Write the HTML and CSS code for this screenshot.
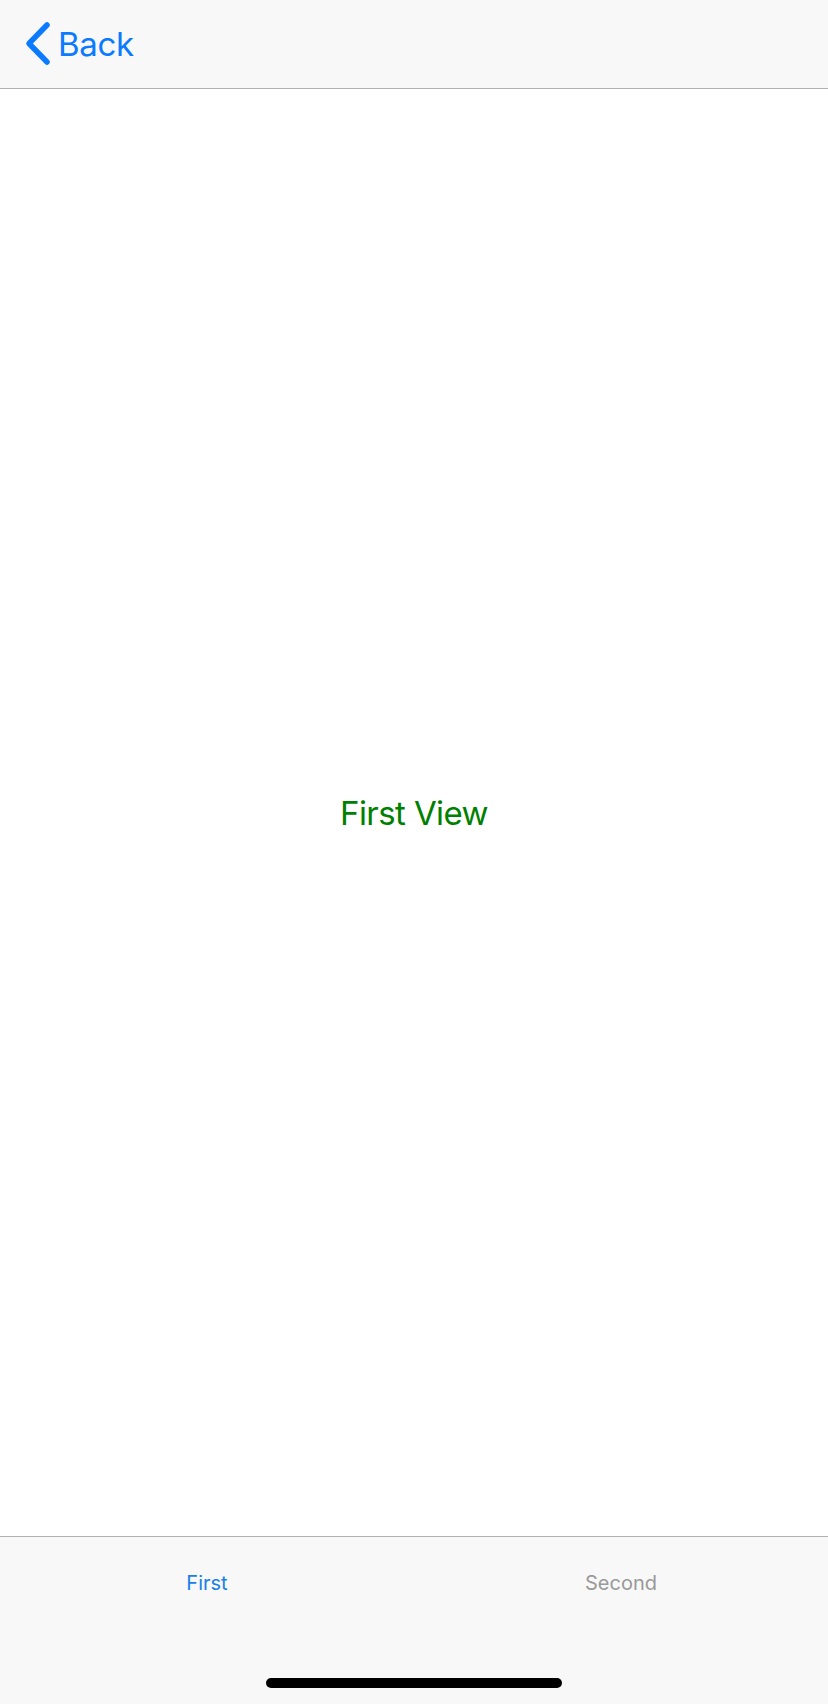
FILE: index.html
```html
<!DOCTYPE html>
<html lang="en">
<head>
<meta charset="utf-8">
<title>First View</title>
<link rel="stylesheet" href="styles.css">
</head>
<body>
<div class="screen">
  <header class="nav">
    <a class="back" href="#">
      <svg class="chev" width="30" height="46" viewBox="0 0 30 46" aria-hidden="true">
        <path d="M23 4 L5 22.5 L23 41" fill="none" stroke="#0a7aff" stroke-width="5.5" stroke-linecap="round" stroke-linejoin="round"/>
      </svg>
      <span class="back-label">Back</span>
    </a>
  </header>
  <main class="content">
    <p class="title">First View</p>
  </main>
  <footer class="tabbar">
    <nav class="tabs">
      <span class="tab active">First</span>
      <span class="tab">Second</span>
    </nav>
    <div class="home-area"><div class="home-indicator"></div></div>
  </footer>
</div>
</body>
</html>
```

FILE: styles.css
```css
html, body {
  margin: 0;
  padding: 0;
  background: #ffffff;
}
body {
  font-family: Inter, "Liberation Sans", Arial, sans-serif;
}
.screen {
  width: 828px;
  height: 1704px;
  display: flex;
  flex-direction: column;
  overflow: hidden;
}
.nav {
  height: 88px;
  flex: none;
  background: #f8f8f8;
  border-bottom: 1px solid #b2b2b2;
  display: flex;
  align-items: center;
  padding-left: 24px;
  box-sizing: content-box;
}
.back {
  display: flex;
  align-items: center;
  text-decoration: none;
  color: #0a7aff;
  gap: 4px;
}
.chev {
  display: block;
}
.back-label {
  font-size: 33px;
  letter-spacing: -0.3px;
  line-height: 40px;
}
.content {
  flex: 1;
  display: flex;
  align-items: center;
  justify-content: center;
}
.title {
  margin: 0;
  color: #008000;
  font-size: 33px;
  letter-spacing: -0.6px;
  line-height: 40px;
}
.tabbar {
  flex: none;
  height: 167px;
  background: #f8f8f8;
  border-top: 1px solid #b2b2b2;
  display: flex;
  flex-direction: column;
}
.tabs {
  height: 98px;
  display: grid;
  grid-template-columns: 1fr 1fr;
}
.tab {
  text-align: center;
  font-size: 20px;
  line-height: 24px;
  padding-top: 34px;
  color: #999999;
}
.tab.active {
  color: #1a7fea;
}
.home-area {
  flex: 1;
  display: flex;
  justify-content: center;
  padding-top: 43px;
}
.home-indicator {
  width: 296px;
  height: 10px;
  border-radius: 5px;
  background: #000000;
}
```
